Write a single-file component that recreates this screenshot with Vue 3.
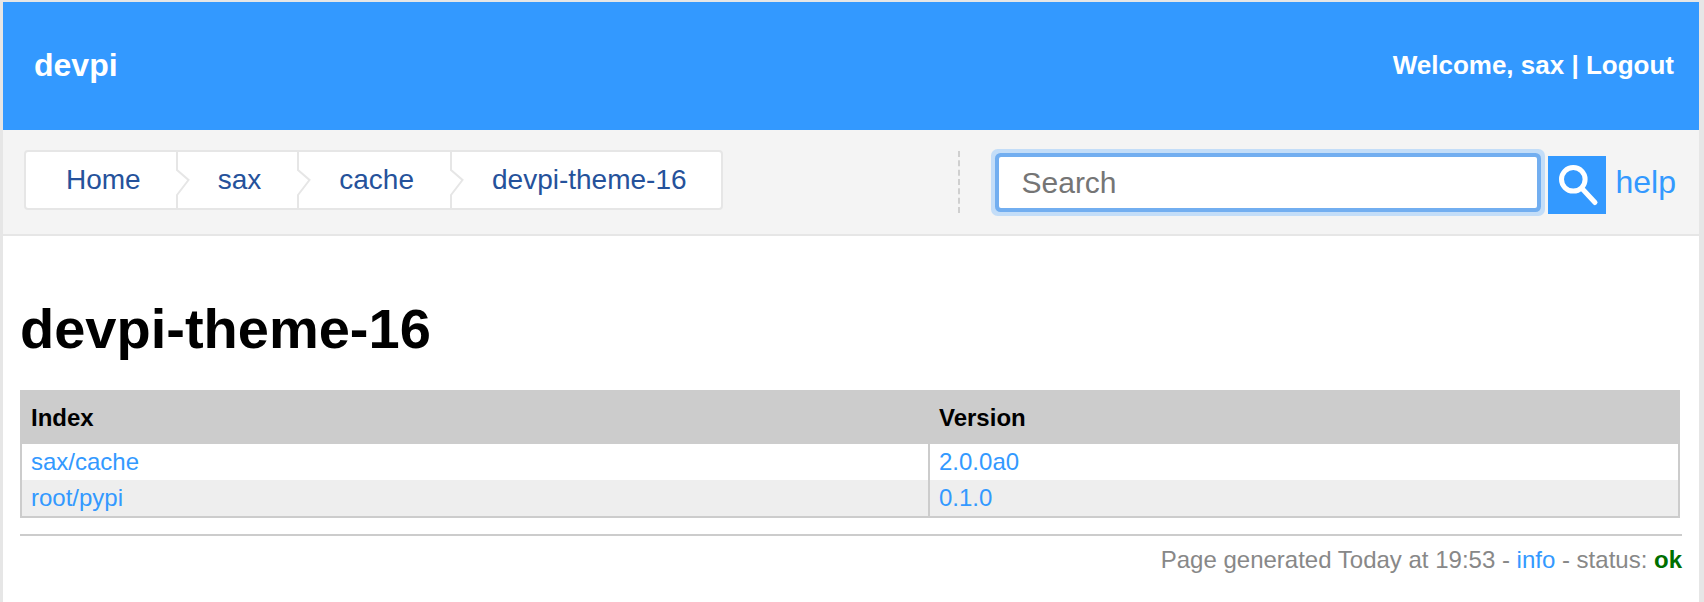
<script setup>
const crumbs = ['Home', 'sax', 'cache', 'devpi-theme-16']
const rows = [
  { index: 'sax/cache', version: '2.0.0a0' },
  { index: 'root/pypi', version: '0.1.0' }
]
</script>

<template>
  <div class="frame">
    <header class="top">
      <a class="brand">devpi</a>
      <div class="user">Welcome, sax | <a>Logout</a></div>
    </header>
    <nav class="bar">
      <ul class="crumbs">
        <li v-for="(c, i) in crumbs" :key="c" class="crumb">
          <svg v-if="i > 0" class="chev" width="14" height="56" viewBox="0 0 14 56">
            <path d="M1 0V18L12.5 28L1 43V56" fill="none" stroke="#e6e6e6" stroke-width="2" />
          </svg>
          <a>{{ c }}</a>
        </li>
      </ul>
      <form class="search" @submit.prevent>
        <input class="field" type="text" placeholder="Search" />
        <button class="go" type="button" aria-label="Search">
          <svg width="58" height="58" viewBox="0 0 58 58">
            <circle cx="25.3" cy="23.3" r="11.8" fill="none" stroke="#fff" stroke-width="5" />
            <path d="M34 32.5L47 46.5" fill="none" stroke="#fff" stroke-width="5" stroke-linecap="round" />
          </svg>
        </button>
        <a class="help">help</a>
      </form>
    </nav>
    <main class="page">
      <h1>devpi-theme-16</h1>
      <table>
        <thead>
          <tr><th class="first">Index</th><th>Version</th></tr>
        </thead>
        <tbody>
          <tr v-for="r in rows" :key="r.index">
            <td class="first"><a>{{ r.index }}</a></td>
            <td><a>{{ r.version }}</a></td>
          </tr>
        </tbody>
      </table>
      <footer>
        Page generated Today at 19:53 - <a>info</a> - status: <b>ok</b>
      </footer>
    </main>
  </div>
</template>

<style scoped>
.frame {
  box-sizing: border-box;
  min-height: 602px;
  border-style: solid;
  border-color: #e6e6e6;
  border-width: 2px 5px 0 3px;
  background: #fff;
  font-family: "Liberation Sans", Arial, sans-serif;
  color: #000;
}
a { color: #3399ff; text-decoration: none; }
.top {
  height: 128px;
  background: #3399ff;
  display: flex;
  align-items: center;
  justify-content: space-between;
  padding: 0 25px 0 31px;
  color: #fff;
  font-weight: bold;
}
.brand { color: #fff; font-size: 32px; margin-top: -2px; }
.user { font-size: 26px; margin-top: -2px; }
.user a { color: #fff; }
.bar {
  box-sizing: border-box;
  height: 106px;
  background: #f4f4f4;
  border-bottom: 2px solid #e6e6e6;
  display: flex;
  align-items: center;
  padding: 0 23px 0 21px;
}
.crumbs {
  list-style: none;
  margin: 0 0 4px;
  padding: 0;
  display: flex;
  height: 60px;
  box-sizing: border-box;
  background: #fff;
  border: 2px solid #e6e6e6;
  border-radius: 4px;
}
.crumb {
  position: relative;
  display: flex;
  align-items: center;
  padding: 0 37px 0 41px;
  font-size: 28px;
}
.crumb:first-child { padding: 0 36px 0 40px; }
.crumb:last-child { padding-right: 34px; }
.crumb a { color: #25529b; }
.chev { position: absolute; left: -1px; top: 0; }
.search {
  margin-left: auto;
  display: flex;
  align-items: center;
  height: 62px;
  border-left: 2px dashed #cfcfcf;
  padding-left: 39px;
}
.field {
  box-sizing: border-box;
  width: 538px;
  height: 51px;
  padding: 2px 22px 0 23px;
  border: 0;
  outline: 0;
  background: #fff;
  font: 30px "Liberation Sans", Arial, sans-serif;
  color: #333;
  box-shadow: 0 0 0 4px #72aef0, 0 0 0 8px #c3ddf8;
  border-radius: 2px;
}
.field::placeholder { color: #757575; opacity: 1; }
.go {
  width: 58px;
  height: 58px;
  margin: 6px 0 0 11px;
  padding: 0;
  border: 0;
  background: #3399ff;
  display: block;
}
.go svg { display: block; }
.help { margin: 0 0 0 10px; font-size: 32px; }
.page { padding: 0 17px; }
h1 {
  margin: 0;
  padding-top: 63px;
  height: 91px;
  font-size: 56px;
  line-height: 60px;
  font-weight: bold;
}
table {
  box-sizing: border-box;
  width: 1660px;
  border: 2px solid #ccc;
  border-spacing: 0;
  table-layout: fixed;
  font-size: 24px;
}
th {
  height: 52px;
  padding: 0 9px;
  background: #ccc;
  text-align: left;
  font-weight: bold;
}
th.first, td.first { width: 908px; box-sizing: border-box; }
td {
  height: 36px;
  padding: 0 9px;
  line-height: 28px;
}
td.first { border-right: 2px solid #ccc; }
tbody tr:nth-child(2) td { background: #eee; }
footer {
  margin-top: 16px;
  border-top: 2px solid #ccc;
  padding-top: 8px;
  text-align: right;
  font-size: 24px;
  line-height: 32px;
  color: #888;
}
footer b { color: #006f00; }
</style>

<style>
html, body { margin: 0; background: #fff; }
</style>
